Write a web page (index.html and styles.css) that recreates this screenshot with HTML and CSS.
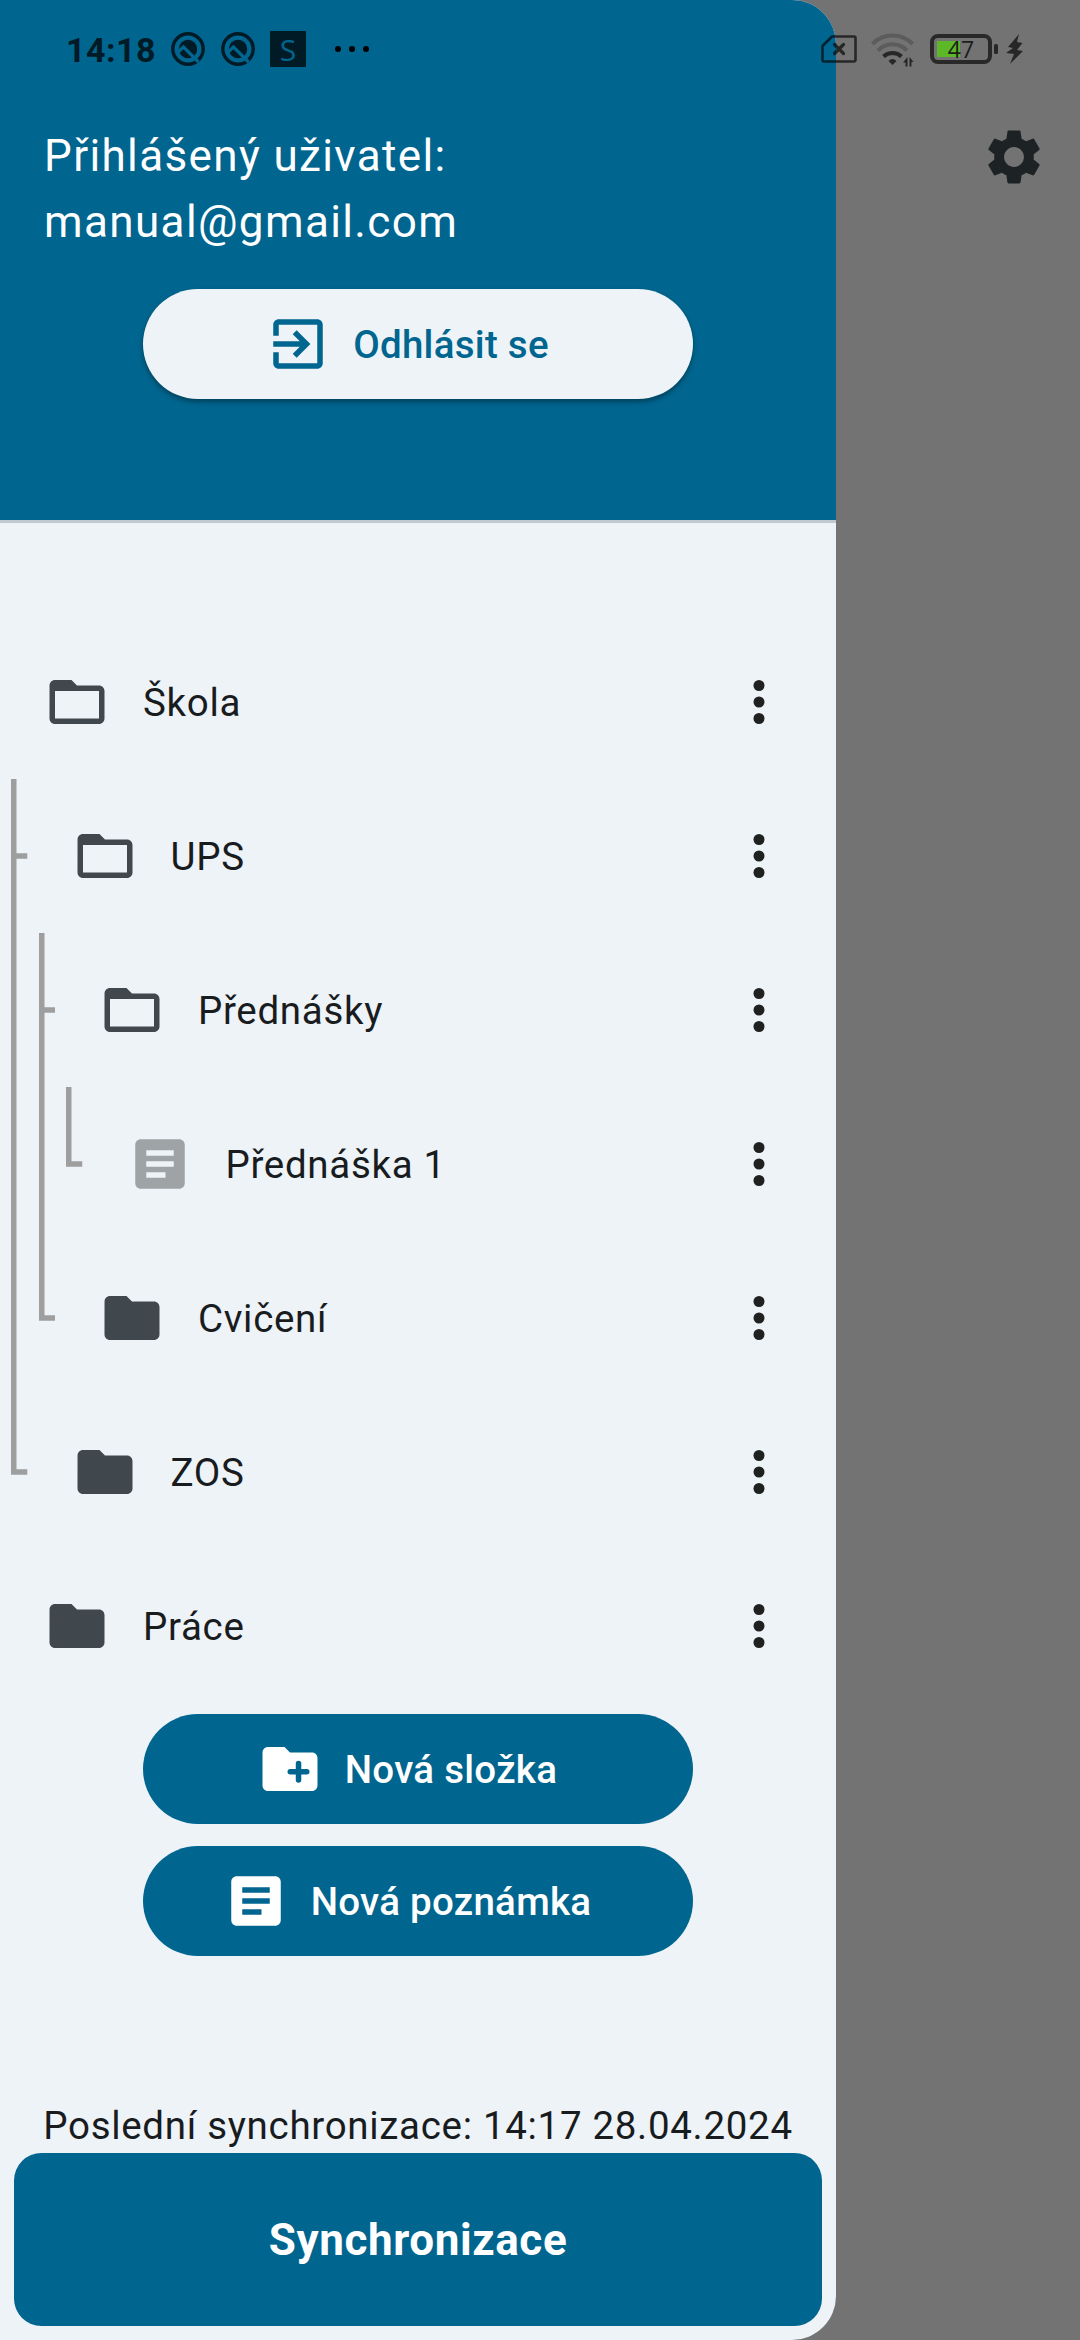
FILE: index.html
```html
<!DOCTYPE html>
<html lang="cs">
<head>
<meta charset="utf-8">
<title>Poznámky</title>
<link rel="stylesheet" href="styles.css">
</head>
<body>
<svg class="defs" width="0" height="0" aria-hidden="true">
  <symbol id="folder-open" viewBox="0 0 24 24"><path d="M20 6h-8l-2-2H4c-1.1 0-1.99.9-1.99 2L2 18c0 1.1.9 2 2 2h16c1.1 0 2-.9 2-2V8c0-1.1-.9-2-2-2zm0 12H4V8h16v10z"/></symbol>
  <symbol id="folder" viewBox="0 0 24 24"><path d="M10 4H4c-1.1 0-1.99.9-1.99 2L2 18c0 1.1.9 2 2 2h16c1.1 0 2-.9 2-2V8c0-1.1-.9-2-2-2h-8l-2-2z"/></symbol>
  <symbol id="note" viewBox="0 0 24 24"><path d="M19 3H5c-1.1 0-2 .9-2 2v14c0 1.1.9 2 2 2h14c1.1 0 2-.9 2-2V5c0-1.1-.9-2-2-2zm-5 14H7v-2h7v2zm3-4H7v-2h10v2zm0-4H7V7h10v2z"/></symbol>
  <symbol id="more" viewBox="0 0 24 24"><circle cx="12" cy="6" r="2"/><circle cx="12" cy="12" r="2"/><circle cx="12" cy="18" r="2"/></symbol>
  <symbol id="guide-pipe" viewBox="0 0 27.5 154"><path d="M11 0h5.5v154H11z"/></symbol>
  <symbol id="guide-tee" viewBox="0 0 27.5 154"><path d="M11 0h5.5v74.25h11v5.5h-11V154H11z"/></symbol>
  <symbol id="guide-end" viewBox="0 0 27.5 154"><path d="M11 0h5.5v74.25h11v5.5H11z"/></symbol>
  <symbol id="search-app" viewBox="0 0 34 34">
    <circle cx="17" cy="17" r="15.2" fill="none" stroke="currentColor" stroke-width="3.4"/>
    <circle cx="17" cy="17" r="9.2"/>
    <path d="M5.500 21.500L12.500 15 27.500 30" fill="none" stroke="#00658f" stroke-width="3.200"/>
  </symbol>
</svg>

<div class="screen">
  <header class="status">
    <div class="status-left">
      <span class="clock">14:18</span>
      <svg class="app-icon"><use href="#search-app"/></svg>
      <svg class="app-icon second"><use href="#search-app"/></svg>
      <span class="s-icon">S</span>
      <svg class="ellipsis" viewBox="0 0 34 6"><circle cx="3" cy="3" r="3"/><circle cx="17" cy="3" r="3"/><circle cx="31" cy="3" r="3"/></svg>
    </div>
    <div class="status-right">
      <svg class="sim" viewBox="0 0 36 28"><path d="M11 1.500H33a1.500 1.500 0 0 1 1.500 1.500V25a1.500 1.500 0 0 1-1.500 1.500H3A1.500 1.500 0 0 1 1.500 25V11z" fill="none" stroke="#000" stroke-width="2.600" stroke-linejoin="round"/><path d="M13.500 9.500l9 9m0-9l-9 9" stroke="#000" stroke-width="3.200" stroke-linecap="round"/></svg>
      <svg class="wifi" viewBox="0 0 44 34"><g fill="none" stroke="#000" stroke-width="4"><path opacity=".3" d="M1.500 11a28 28 0 0 1 40 0M7 17.500a20 20 0 0 1 29 0"/><path d="M12.500 23.500a13 13 0 0 1 18 0"/></g><path d="M17.500 28q4-4 8 0L21.500 32z"/><path d="M36.500 24v9.500h-2v-4h-2.500zM38.500 33.500V24l4 5h-2v4.500z"/></svg>
      <div class="battery"><span>47</span></div>
      <svg class="battery-tip" viewBox="0 0 4 10"><rect width="4" height="10" rx="1.500"/></svg>
      <svg class="bolt" viewBox="0 0 17 30"><path d="M13 0L2 13l5 1-7 5 8 1-4 10 13-13-6-1 5.500-7L11 8z"/></svg>
    </div>
  </header>

  <aside class="drawer">
    <section class="account">
      <p>Přihlášený uživatel:<br>manual@gmail.com</p>
      <button class="pill logout"><svg class="icon" viewBox="0 0 24 24"><path d="M10.090 15.590L11.500 17l5-5-5-5-1.410 1.410L12.670 11H3v2h9.670l-2.580 2.590zM19 3H5c-1.110 0-2 .9-2 2v4h2V5h14v14H5v-4H3v4c0 1.100.89 2 2 2h14c1.100 0 2-.9 2-2V5c0-1.100-.9-2-2-2z"/></svg>Odhlásit se</button>
    </section>

    <ul class="tree">
      <li class="row"><div class="tile"><svg class="icon"><use href="#folder-open"/></svg><span>Škola</span><svg class="icon more"><use href="#more"/></svg></div></li>
      <li class="row"><svg class="guide"><use href="#guide-tee"/></svg><div class="tile"><svg class="icon"><use href="#folder-open"/></svg><span>UPS</span><svg class="icon more"><use href="#more"/></svg></div></li>
      <li class="row"><svg class="guide"><use href="#guide-pipe"/></svg><svg class="guide"><use href="#guide-tee"/></svg><div class="tile"><svg class="icon"><use href="#folder-open"/></svg><span>Přednášky</span><svg class="icon more"><use href="#more"/></svg></div></li>
      <li class="row"><svg class="guide"><use href="#guide-pipe"/></svg><svg class="guide"><use href="#guide-pipe"/></svg><svg class="guide"><use href="#guide-end"/></svg><div class="tile"><svg class="icon note"><use href="#note"/></svg><span>Přednáška 1</span><svg class="icon more"><use href="#more"/></svg></div></li>
      <li class="row"><svg class="guide"><use href="#guide-pipe"/></svg><svg class="guide"><use href="#guide-end"/></svg><div class="tile"><svg class="icon"><use href="#folder"/></svg><span>Cvičení</span><svg class="icon more"><use href="#more"/></svg></div></li>
      <li class="row"><svg class="guide"><use href="#guide-end"/></svg><div class="tile"><svg class="icon"><use href="#folder"/></svg><span>ZOS</span><svg class="icon more"><use href="#more"/></svg></div></li>
      <li class="row"><div class="tile"><svg class="icon"><use href="#folder"/></svg><span>Práce</span><svg class="icon more"><use href="#more"/></svg></div></li>
    </ul>

    <div class="actions">
      <button class="pill"><svg class="icon" viewBox="0 0 24 24"><use href="#folder"/><path class="plus" d="M15.100 10v6M12.100 13h6"/></svg>Nová složka</button>
      <button class="pill"><svg class="icon"><use href="#note"/></svg>Nová poznámka</button>
    </div>

    <footer class="sync">
      <p>Poslední synchronizace: 14:17 28.04.2024</p>
      <button class="sync-button">Synchronizace</button>
    </footer>
  </aside>

  <svg class="icon settings" viewBox="0 0 24 24"><path d="M19.140 12.940c.04-.3.06-.61.06-.94 0-.32-.02-.64-.07-.94l2.030-1.580c.18-.14.23-.41.12-.61l-1.920-3.320c-.12-.22-.37-.29-.59-.22l-2.390.96c-.5-.38-1.030-.7-1.620-.94l-.36-2.540c-.04-.24-.24-.41-.48-.41h-3.840c-.24 0-.43.17-.47.41l-.36 2.540c-.59.24-1.130.57-1.620.94l-2.390-.96c-.22-.08-.47 0-.59.22L2.740 8.870c-.12.21-.08.47.12.61l2.030 1.580c-.05.3-.09.63-.09.94s.02.64.07.94l-2.030 1.580c-.18.14-.23.41-.12.61l1.920 3.320c.12.22.37.29.59.22l2.390-.96c.5.38 1.030.7 1.620.94l.36 2.540c.05.24.24.41.48.41h3.840c.24 0 .44-.17.47-.41l.36-2.540c.59-.24 1.130-.56 1.620-.94l2.390.96c.22.08.47 0 .59-.22l1.920-3.320c.12-.22.07-.47-.12-.61l-2.010-1.580zM12 15.600c-1.980 0-3.600-1.620-3.600-3.600s1.620-3.600 3.600-3.600 3.600 1.620 3.600 3.600-1.620 3.600-3.600 3.600z"/></svg>
</div>
</body>
</html>
```

FILE: styles.css
```css
* { box-sizing: border-box; }

body {
  margin: 0;
  background: #737373;
  font-family: Roboto, "Noto Sans", sans-serif;
}

p, ul { margin: 0; padding: 0; list-style: none; }

button {
  border: 0;
  font-family: inherit;
}

.defs { position: absolute; }

.screen {
  position: relative;
  display: flex;
  justify-content: space-between;
  width: 1080px;
  height: 2340px;
  overflow: hidden;
}

/* System status bar, drawn above the drawer */
.status {
  position: absolute;
  z-index: 2;
  top: 0;
  left: 0;
  display: flex;
  justify-content: space-between;
  width: 100%;
  height: 98px;
  padding: 0 56px 0 66px;
}

.status-left, .status-right { display: flex; align-items: center; }
.status-left { color: #001a26; }
.status-right svg { opacity: .65; }

.clock {
  width: 105px;
  font-size: 34px;
  font-weight: 700;
  letter-spacing: .5px;
  padding-top: 1px;
}

.app-icon { width: 34px; height: 34px; fill: currentColor; }
.app-icon.second { margin-left: 16px; }

.s-icon {
  width: 36px;
  height: 36px;
  margin-left: 15px;
  background: #001a26;
  color: #00658f;
  font: 500 30px/37px "Open Sans", sans-serif;
  text-align: center;
}

.ellipsis { width: 34px; height: 6px; margin-left: 29px; }

.sim { width: 36px; height: 28px; }
.wifi { width: 44px; height: 34px; margin: 2px 0 0 14px; }

.battery {
  width: 62px;
  height: 30px;
  margin-left: 15px;
  border: 4px solid #292929;
  border-radius: 8px;
  background: linear-gradient(#5cb826, #5cb826) 3px 3px / 23px 16px no-repeat;
  color: #1b1e19;
  font: 23px/23px "Open Sans", sans-serif;
  text-align: center;
}

.battery-tip { width: 4px; height: 10px; margin-left: 2px; }
.bolt { width: 17px; height: 30px; margin: 0 1px 0 8px; }

/* Drawer */
.drawer {
  display: flex;
  flex-direction: column;
  width: 836px;
  height: 2340px;
  border-radius: 0 44px 44px 0;
  background: #eef3f8;
  color: #191c1e;
  overflow: hidden;
}

.icon { flex: none; width: 66px; height: 66px; fill: currentColor; }

.account {
  height: 523px;
  padding-top: 123px;
  border-bottom: 3px solid #c0c8d0;
  background: #00658f;
  color: #fff;
}

.account p {
  padding-left: 44px;
  font-size: 44px;
  line-height: 66px;
  letter-spacing: 1.375px;
}

.pill {
  display: flex;
  align-items: center;
  justify-content: center;
  gap: 22px;
  width: 550px;
  height: 110px;
  margin: 0 auto;
  padding: 0 66px 0 44px;
  border-radius: 55px;
  background: #00658f;
  color: #fff;
  font-size: 38.5px;
  font-weight: 500;
  letter-spacing: .275px;
}

.logout {
  margin-top: 34px;
  background: #eef3f8;
  color: #00658f;
  box-shadow: 0 3px 5px rgba(0, 0, 0, .35);
}

.plus {
  fill: none;
  stroke: #00658f;
  stroke-width: 2;
  stroke-linecap: round;
}

.tree { padding-top: 102px; }
.row { display: flex; height: 154px; }
.guide { flex: none; width: 27.5px; height: 154px; fill: #9e9e9e; }

.tile {
  display: flex;
  flex: 1;
  align-items: center;
  gap: 33px;
  padding: 0 44px;
  font-size: 38.5px;
  letter-spacing: .6875px;
}

.tile .icon { color: #41484d; }
.tile .note { color: #9fa3a6; }
.tile .more { margin-left: auto; color: #1f2121; }

.actions {
  display: flex;
  flex-direction: column;
  gap: 22px;
  padding-top: 11px;
}

.sync {
  margin-top: auto;
  padding: 0 13.75px 13.75px;
  text-align: center;
}

.sync p {
  font-size: 38.5px;
  line-height: 55px;
  letter-spacing: .6875px;
  white-space: nowrap;
}

.sync-button {
  display: block;
  width: 100%;
  height: 173.25px;
  border-radius: 27.5px;
  background: #00658f;
  color: #fff;
  font-size: 44px;
  font-weight: 700;
  letter-spacing: .6px;
}

.settings { margin: 124px 33px 0 0; color: #1d2225; }
```
